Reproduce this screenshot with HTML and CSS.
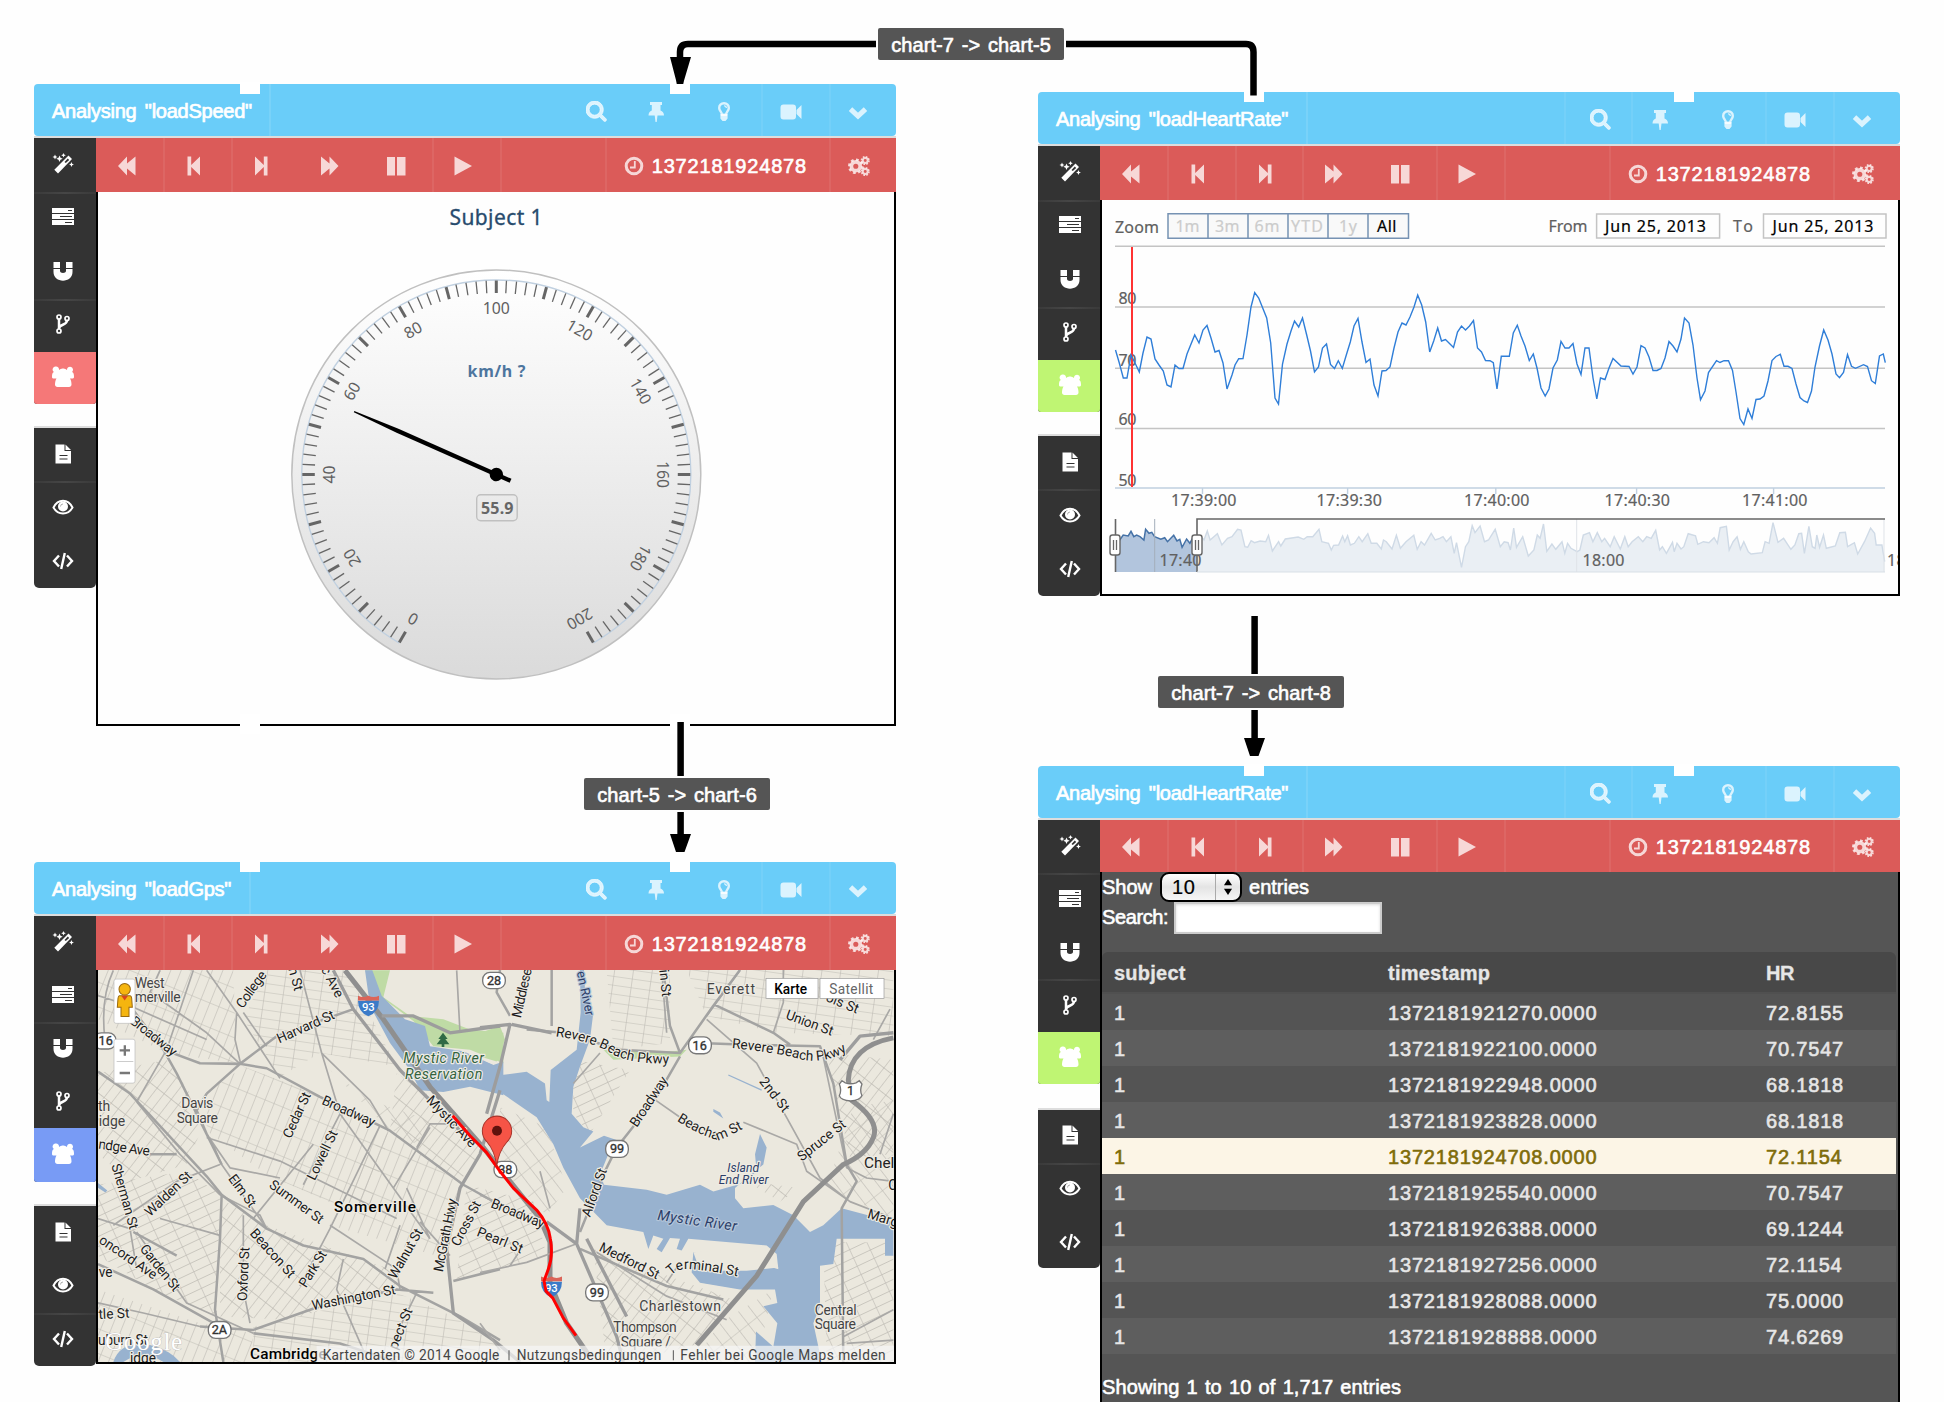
FILE: index.html
```html
<!DOCTYPE html>
<html lang="en">
<head>
<meta charset="utf-8">
<title>Chart analysis</title>
<link rel="stylesheet" href="styles.css">
</head>
<body>
<svg class="defs" aria-hidden="true">
  <symbol id="search" viewBox="0 0 1792 1792"><path d="M1152 704q0-185-131.500-316.500t-316.500-131.500-316.500 131.500-131.500 316.500 131.500 316.500 316.500 131.500 316.500-131.500 131.500-316.500zm512 832q0 52-38 90t-90 38q-54 0-90-38l-343-342q-179 124-399 124-143 0-273.500-55.500t-225-150-150-225-55.500-273.500 55.500-273.500 150-225 225-150 273.500-55.500 273.500 55.500 225 150 150 225 55.500 273.500q0 220-124 399l343 343q37 37 37 90z" stroke="currentColor" stroke-width="70"/></symbol>
  <symbol id="pin" viewBox="0 0 22 22"><path d="M5 1h12v3h-1.500v5.500c2 .8 3.500 2.500 3.500 5h-6.500L11.700 21h-1.200l-.8-6.500H3.500c0-2.500 1.300-4.200 3.300-5V4H5z"/></symbol>
  <symbol id="bulb" viewBox="0 0 22 22"><path d="M11 2.200c3 0 4.800 2.200 4.800 4.700 0 2.800-2.600 4-2.800 6.800H9c-.2-2.800-2.800-4-2.800-6.800C6.200 4.400 8 2.200 11 2.200z" fill="none" stroke="currentColor" stroke-width="2.400"/><path d="M7.400 13h7.200v4.500L12.500 20h-3l-2.100-2.500zM11 4.200c2 0 3 1.200 3 2.800h-1.300c0-1-.6-1.600-1.700-1.600z"/></symbol>
  <symbol id="video" viewBox="0 0 22 22"><path d="M3.500 3.500h9.500a3 3 0 0 1 3 3v9a3 3 0 0 1-3 3H3.500a3 3 0 0 1-3-3v-9a3 3 0 0 1 3-3zM16.500 9 21.500 4v14l-5-5z"/></symbol>
  <symbol id="down" viewBox="0 0 22 22"><path d="m3.500 8.200 7.500 7 7.500-7" fill="none" stroke="currentColor" stroke-width="5"/></symbol>
  <symbol id="rewind" viewBox="0 0 22 22"><path d="M2 11 11 1.500v7l8.500-7v19l-8.500-7v7z"/></symbol>
  <symbol id="prev" viewBox="0 0 22 22"><path d="M4.500 1.500h3.700V10l8.800-8.500v19L8.200 12v8.500H4.500z"/></symbol>
  <symbol id="next" viewBox="0 0 22 22"><path d="M17.500 1.500h-3.700V10L5 1.500v19l8.800-8.500v8.500h3.700z"/></symbol>
  <symbol id="forward" viewBox="0 0 22 22"><path d="M20.500 11 11.500 1.500v7L3 1.500v19l8.500-7v7z"/></symbol>
  <symbol id="pause" viewBox="0 0 22 22"><path d="M2 2h8v18.500H2zM12 2h8.500v18.500H12z"/></symbol>
  <symbol id="play" viewBox="0 0 22 22"><path d="M2.500 1.500 20 11 2.500 20.500z"/></symbol>
  <symbol id="clock" viewBox="0 0 22 22"><circle cx="11" cy="11" r="7.800" fill="none" stroke="currentColor" stroke-width="3"/><path d="M11.800 6v6.500H7" fill="none" stroke="currentColor" stroke-width="1.800"/></symbol>
  <symbol id="cogs" viewBox="0 0 24 22"><g fill="none" stroke="currentColor"><circle cx="8.500" cy="11.300" r="4.800" stroke-width="4"/><circle cx="8.500" cy="11.300" r="7.300" stroke-width="2.400" stroke-dasharray="3 2.733"/><circle cx="18.800" cy="5" r="2.700" stroke-width="2.200"/><circle cx="18.800" cy="5" r="4.200" stroke-width="1.600" stroke-dasharray="1.900 1.400"/><circle cx="18.800" cy="17" r="2.700" stroke-width="2.200"/><circle cx="18.800" cy="17" r="4.200" stroke-width="1.600" stroke-dasharray="1.900 1.400"/></g></symbol>
  <symbol id="wand" viewBox="0 0 22 22"><path d="M16.500 2.500 20 6 6 20.500 2.300 16.800zM15.800 5.500l-3.300 3.400 1.300 1.200L17.200 7zM3 1.500l.8 1.700 1.700.8-1.700.8L3 6.500l-.8-1.700L.5 4l1.700-.8zM11.500 0l.7 1.600 1.600.7-1.600.7-.7 1.600-.7-1.600-1.600-.7 1.600-.7zM7.500 2.500l1 2.200 2.200 1-2.200 1-1 2.200-1-2.200-2.200-1 2.200-1zM19.500 9l.7 1.700 1.700.8-1.700.7-.7 1.700-.8-1.700-1.600-.7 1.600-.8z"/></symbol>
  <symbol id="tasks" viewBox="0 0 22 22"><path fill-rule="evenodd" d="M0 2h22v5H0zM16 4v1h4V4zM0 8h22v5H0zM8 10v1h12v-1zM0 14h22v5H0zM13 16v1h7v-1z"/></symbol>
  <symbol id="magnet" viewBox="0 0 22 22"><path d="M1.500 2H8v6H1.500zM14 2h6.500v6H14zM1.500 9H8v2c0 2.600 6 2.600 6 0V9h6.500v3c0 11.500-19 11.500-19 0z"/></symbol>
  <symbol id="fork" viewBox="0 0 22 22"><g fill="none" stroke="currentColor"><g stroke-width="1.700"><circle cx="7" cy="4" r="2"/><circle cx="7" cy="18" r="2"/><circle cx="15" cy="5.500" r="2"/></g><path d="M7 6v10M15 7.500c0 5-8 3.500-8 8" stroke-width="2.500"/></g></symbol>
  <symbol id="group" viewBox="0 0 22 22"><path d="M4 .5a3 3 0 0 1 3 3.500A5 5 0 0 1 11 2.500 5 5 0 0 1 15 4a3 3 0 1 1 5 2c1.500.5 2 2 2 5 0 1-.8 1.500-2 1.500h-2c1 1.500 1.500 4 1.500 6 0 1.500-1 2.500-2.500 2.500H5.500C4 21 3 20 3 18.500c0-2 .5-4.500 1.500-6H2C.8 12.500 0 12 0 11c0-3 .5-4.500 2-5A3 3 0 0 1 4 .5z"/></symbol>
  <symbol id="file" viewBox="0 0 22 22"><path d="M3.500 1.500h9v6.500h6.500v12.500H3.500zM13.500 1.500 19 7h-5.500z"/><path d="M7.500 12.500h8M7.500 16h8" stroke="#333" stroke-width="1.200"/></symbol>
  <symbol id="eye" viewBox="0 0 22 22"><path d="M1.500 11.500C6 2.500 16 2.500 20.500 11.500 16 19.500 6 19.500 1.500 11.500z" fill="none" stroke="currentColor" stroke-width="2"/><circle cx="11" cy="10.500" r="5"/><path d="M8.500 10.500a2.500 2.500 0 0 1 2.500-2.500" fill="none" stroke="#999" stroke-width=".8"/></symbol>
  <symbol id="code" viewBox="0 0 22 22"><path d="M7 6.500 2 12l5 5.500M15 6.500l5 5.500-5 5.500M12.800 4 9.200 20" fill="none" stroke="currentColor" stroke-width="2.400"/></symbol>
</svg>

<main class="canvas">

<section class="win win-speed">
  <header class="head"><h2>Analysing "loadSpeed"</h2>
    <span class="btn find"><svg><use href="#search"/></svg></span><span class="btn hb"><svg><use href="#pin"/></svg></span><span class="btn hb"><svg><use href="#bulb"/></svg></span><span class="btn hb edge"><svg><use href="#video"/></svg></span><span class="btn edge"><svg><use href="#down"/></svg></span></header>
  <div class="cols">
    <nav class="side"><div class="grp top"><span><svg><use href="#wand"/></svg></span><span class="line"><svg><use href="#tasks"/></svg></span><span><svg><use href="#magnet"/></svg></span><span class="line"><svg><use href="#fork"/></svg></span><span class="subject red"><svg><use href="#group"/></svg></span></div>
      <div class="grp low"><span><svg><use href="#file"/></svg></span><span class="line"><svg><use href="#eye"/></svg></span><span><svg><use href="#code"/></svg></span></div></nav>
    <div class="main">
      <div class="player"><span class="btn"><svg><use href="#rewind"/></svg></span><span class="btn edge"><svg><use href="#prev"/></svg></span><span class="btn edge"><svg><use href="#next"/></svg></span><span class="btn"><svg><use href="#forward"/></svg></span><span class="btn"><svg><use href="#pause"/></svg></span><span class="btn edge"><svg><use href="#play"/></svg></span><span class="fill edge"></span><span class="time edge"><svg><use href="#clock"/></svg>1372181924878</span><span class="btn edge"><svg><use href="#cogs"/></svg></span></div>
      <div class="view">
        <svg class="plot" viewBox="98 192 796 532">
          <defs><linearGradient id="dial" x1="0" y1="0" x2="0" y2="1"><stop offset="0" stop-color="#fff"/><stop offset="1" stop-color="#dadada"/></linearGradient></defs>
          <text x="449.500" y="224.500" class="gtitle" textLength="93">Subject 1</text>
          <circle cx="496.300" cy="474.500" r="204.500" fill="url(#dial)" stroke="#c0c0c0" stroke-width="1.500"/>
          <g id="ticks" transform="translate(496.300 474.500)"></g>
          <text x="467.500" y="376.700" class="gunit" textLength="58">km/h ?</text>
          <rect x="476.700" y="494.800" width="40.500" height="26" rx="4" fill="none" stroke="#c0c0c0" stroke-width="1.400"/>
          <text x="481" y="514" class="gval" textLength="32.500">55.9</text>
          <g transform="translate(496.300 474.500) rotate(-66.150)"><path d="M-2.200 15.600V-108L-.6-155.500H.6L2.200-108V15.600z"/><circle r="6.700"/></g>
        </svg>
      </div>
    </div>
  </div>
</section>

<section class="win right win-heart">
  <header class="head"><h2>Analysing "loadHeartRate"</h2>
    <span class="btn find edge"><svg><use href="#search"/></svg></span><span class="btn hb edge"><svg><use href="#pin"/></svg></span><span class="btn hb"><svg><use href="#bulb"/></svg></span><span class="btn hb edge"><svg><use href="#video"/></svg></span><span class="btn edge"><svg><use href="#down"/></svg></span></header>
  <div class="cols">
    <nav class="side"><div class="grp top"><span><svg><use href="#wand"/></svg></span><span class="line"><svg><use href="#tasks"/></svg></span><span><svg><use href="#magnet"/></svg></span><span class="line"><svg><use href="#fork"/></svg></span><span class="subject green"><svg><use href="#group"/></svg></span></div>
      <div class="grp low"><span><svg><use href="#file"/></svg></span><span class="line"><svg><use href="#eye"/></svg></span><span><svg><use href="#code"/></svg></span></div></nav>
    <div class="main">
      <div class="player"><span class="btn"><svg><use href="#rewind"/></svg></span><span class="btn edge"><svg><use href="#prev"/></svg></span><span class="btn edge"><svg><use href="#next"/></svg></span><span class="btn edge"><svg><use href="#forward"/></svg></span><span class="btn"><svg><use href="#pause"/></svg></span><span class="btn edge"><svg><use href="#play"/></svg></span><span class="fill edge"></span><span class="time edge"><svg><use href="#clock"/></svg>1372181924878</span><span class="btn edge"><svg><use href="#cogs"/></svg></span></div>
      <div class="view">
        <svg class="plot stock" viewBox="1102 200 796 394">
          <text x="1115" y="232.700" textLength="44">Zoom</text>
          <g class="ranges"><path d="M1168 213.700h240.500v24.500H1168zM1208 213.700v24.500M1248 213.700v24.500M1288 213.700v24.500M1328 213.700v24.500M1368 213.700v24.500"/></g>
          <g class="off"><text x="1175.500" y="232" textLength="24">1m</text><text x="1215" y="232" textLength="24.500">3m</text><text x="1254.500" y="232" textLength="25">6m</text><text x="1291" y="232" textLength="32">YTD</text><text x="1339" y="232" textLength="18">1y</text></g>
          <text class="on" x="1377" y="232" textLength="19.500">All</text>
          <text x="1548.500" y="232" textLength="39">From</text><text x="1733" y="232" textLength="20">To</text>
          <path class="box" d="M1596.600 214h123v24h-123zM1763.500 214h122.500v24h-122.500z"/>
          <text class="on" x="1605" y="232" textLength="101">Jun 25, 2013</text><text class="on" x="1772.500" y="232" textLength="101">Jun 25, 2013</text>
          <path class="grid" d="M1115 246.200h770M1115 307h770M1115 368.300h770M1115 428.500h770"/>
          <path class="axis" d="M1115 488h770M1202.500 488v6M1347.600 488v6M1495.800 488v6M1636.600 488v6M1773.600 488v6"/>
          <text x="1118.500" y="304" textLength="18">80</text><text x="1118.500" y="365.500" textLength="18">70</text><text x="1118.500" y="425" textLength="18">60</text><text x="1118.500" y="485.500" textLength="18">50</text>
          <path class="cursor" d="M1132 247v240"/>
          <path class="series" id="series"/>
          <text x="1171" y="506" textLength="65.500">17:39:00</text><text x="1316.500" y="506" textLength="65.500">17:39:30</text><text x="1464" y="506" textLength="65.500">17:40:00</text><text x="1604.500" y="506" textLength="65.500">17:40:30</text><text x="1742" y="506" textLength="65.500">17:41:00</text>
          <path id="navfill" fill="#eaeff4"/><path id="navline" fill="none" stroke="#cfdae6" stroke-width="1.400"/>
          <path id="selfill" fill="#b2c5dd"/><path id="selline" fill="none" stroke="#4572a7" stroke-width="1.500"/>
          <path d="M1154.700 519v53" stroke="#a3aebb"/><path d="M1576.700 519v53M1884 519v53" stroke="#dfe3e8"/>
          <path d="M1115.500 519v53M1197 572V519h688" fill="none" stroke="#666" stroke-width="1.600"/>
          <path d="M1197 572h688" stroke="#d8dfe6"/>
          <text x="1159.500" y="566" textLength="42">17:40</text><text x="1582.500" y="566" textLength="42">18:00</text><text x="1887" y="566" textLength="42">18:20</text>
          <g class="handle"><rect x="1110" y="535" width="10" height="20" rx="2.500"/><path d="M1113.500 540v10M1116.500 540v10"/><rect x="1192" y="535" width="10" height="20" rx="2.500"/><path d="M1195.500 540v10M1198.500 540v10"/></g>
        </svg>
      </div>
    </div>
  </div>
</section>

<section class="win win-gps">
  <header class="head"><h2>Analysing "loadGps"</h2>
    <span class="btn find"><svg><use href="#search"/></svg></span><span class="btn hb"><svg><use href="#pin"/></svg></span><span class="btn hb"><svg><use href="#bulb"/></svg></span><span class="btn hb edge"><svg><use href="#video"/></svg></span><span class="btn edge"><svg><use href="#down"/></svg></span></header>
  <div class="cols">
    <nav class="side"><div class="grp top"><span><svg><use href="#wand"/></svg></span><span><svg><use href="#tasks"/></svg></span><span class="line"><svg><use href="#magnet"/></svg></span><span><svg><use href="#fork"/></svg></span><span class="subject blue"><svg><use href="#group"/></svg></span></div>
      <div class="grp low"><span><svg><use href="#file"/></svg></span><span><svg><use href="#eye"/></svg></span><span class="line"><svg><use href="#code"/></svg></span></div></nav>
    <div class="main">
      <div class="player"><span class="btn"><svg><use href="#rewind"/></svg></span><span class="btn edge"><svg><use href="#prev"/></svg></span><span class="btn edge"><svg><use href="#next"/></svg></span><span class="btn"><svg><use href="#forward"/></svg></span><span class="btn"><svg><use href="#pause"/></svg></span><span class="btn edge"><svg><use href="#play"/></svg></span><span class="fill edge"></span><span class="time edge"><svg><use href="#clock"/></svg>1372181924878</span><span class="btn edge"><svg><use href="#cogs"/></svg></span></div>
      <div class="view">
        <svg class="plot map" viewBox="234 354 2388 1161" preserveAspectRatio="none">
          <defs>
            <pattern id="s1" width="56" height="27" patternUnits="userSpaceOnUse" patternTransform="rotate(-25)"><path d="M0 0h56M0 0v27" /></pattern>
            <pattern id="s2" width="29" height="68" patternUnits="userSpaceOnUse" patternTransform="rotate(22)"><path d="M0 0h29M0 0v68" /></pattern>
            <pattern id="s3" width="27" height="60" patternUnits="userSpaceOnUse" patternTransform="rotate(38)"><path d="M0 0h27M0 0v60" /></pattern>
            <pattern id="s4" width="56" height="26" patternUnits="userSpaceOnUse" patternTransform="rotate(8)"><path d="M0 0h56M0 0v26" /></pattern>
            <pattern id="s5" width="33" height="64" patternUnits="userSpaceOnUse" patternTransform="rotate(-38)"><path d="M0 0h33M0 0v64" /></pattern>
            <path id="rb1" d="M226 550Q330 565 385 595 430 630 560 632"/>
            <path id="rb2" d="M755 585Q900 600 960 618 1040 635 1110 588"/>
            <path id="bst" d="M590 800Q660 845 715 858 740 850 800 818"/>
            <path id="tst" d="M574 1260Q590 1238 625 1240 700 1245 775 1262"/>
          </defs>
          <rect x="234" y="354" width="2388" height="1161" fill="#ebe8de"/>
          <g class="streets">
            <path fill="url(#s2)" d="M234 354H640L650 630 440 600 234 500z"/>
            <path fill="url(#s4)" d="M740 354H980L1130 640 900 600 780 670 670 500z"/>
            <path fill="url(#s3)" d="M234 660 440 620 560 790 500 930 330 980 234 900z"/>
            <path fill="url(#s2)" d="M670 640 940 740 1110 830 1040 1090 740 960 560 830 560 720z"/>
            <path fill="url(#s5)" d="M930 650 1050 740 1230 800 1190 870 1100 820z"/>
            <path fill="url(#s2)" d="M1110 830 1320 990 1250 1200 930 1110 1040 900z"/>
            <path fill="url(#s1)" d="M234 990 500 950 600 1020 590 1380 400 1300 234 1200z"/>
            <path fill="url(#s3)" d="M600 1030 740 1110 1110 1240 1140 1300 800 1390 600 1380z"/>
            <path fill="url(#s2)" d="M234 1300 540 1400 700 1430 690 1515H234z"/>
            <path fill="url(#s4)" d="M700 1410 1130 1310 1300 1380 1440 1470 1440 1515H700z"/>
            <path fill="url(#s3)" d="M1130 660 1220 720 1390 880 1320 980 1110 830z"/>
            <path fill="url(#s1)" d="M1340 990 1540 1040 1580 1200 1310 1270z"/>
          </g>
          <g class="streets" transform="translate(1380)">
            <path fill="url(#s4)" d="M380 354H570V570L400 590z"/>
            <path fill="url(#s1)" d="M280 620 450 650 330 840 280 780z"/>
            <path fill="url(#s4)" d="M620 354H1240V550L890 540 680 490z"/>
            <path fill="url(#s3)" d="M1040 600 1240 620V900L1110 910z"/>
            <path fill="url(#s5)" d="M1120 760 1240 740V1090L1040 1000z"/>
            <path fill="url(#s3)" d="M800 980 960 1000 900 1040z"/>
            <path fill="url(#s3)" d="M340 1180 760 1330 660 1460 440 1515H380z"/>
            <path fill="url(#s5)" d="M720 1400 880 1300 830 1515H640z"/>
            <path fill="url(#s1)" d="M1030 1160H1240V1515H1040z"/>
            <path fill="url(#s5)" d="M60 760 200 820 260 1000 200 1080 60 940z"/>
          </g>
          <path class="park" d="M1035 355h75l-20 80 80 55 100 10 80 30 100 10v90l-100-40-110-10-60-75-110-80z"/>
          <path class="water" d="M1035 355h22l28 75 70 70 60 20 15 60 100 15 90 40 30-10v100l-100-25-80 15-70-5-30-60-60-80-60-110z"/>
          <path class="water" d="M234 985l28 22-6 6-22-14zM280 1515q20-65 110-50 60 15 90 50h-50q-60-40-120 0z"/>
          <g transform="translate(1380)">
            <path class="park" d="M0 540 60 520 75 560 50 625 0 610zM370 590 580 595 620 590 600 610 400 620z"/>
            <path class="water" d="M0 620 50 640 65 665 140 655 195 690 200 740 208 745 212 650 290 590 302 480 300 354H312L318 470 340 480 330 560 300 640 280 700 275 780 310 820 340 832 300 880 372 845 412 858 385 900 360 960 372 990 500 1005 560 1020 660 990 700 1010 790 985 830 950 825 900 840 840 860 880 850 930 800 970 765 1000 765 1030 790 1060 880 1050 940 1080 990 1130 1030 1110 1085 1060 1240 1100V1200L1215 1200V1150H1070L1060 1225 1020 1230V1350L1000 1400 1025 1515H825L828 1425 880 1470 892 1400 850 1350 892 1340 885 1300 780 1300 660 1280 635 1250 640 1190 760 1200 895 1240 890 1195 860 1170 625 1150 605 1185 590 1180 600 1150 570 1148 545 1190 530 1180 550 1150 520 1140 505 1180 490 1130 380 1110 330 1060 300 1030 250 940 220 870 170 790 60 715 0 700zM700 766l20 10 10 18-30-20z"/>
            <path d="M640 1190 760 1180 880 1195 895 1235 800 1245 660 1245z" fill="#ebe8de"/>
            <path d="M650 1258 780 1262 815 1285 780 1298 670 1280z" class="water"/>
            <path d="M745 665l100 45" class="wline"/>
          </g>
          <g class="road thin">
            <path d="M520 355 440 590 350 745M420 355 390 420 560 540 660 632M234 430 330 460 560 560M650 480 645 560 662 632M280 355Q240 440 255 560M560 355 650 480 780 675M670 480 740 580M840 355 905 600 960 780 850 990M905 600 1050 740 1105 830M960 780 1120 1000 1230 1150M1080 815 930 1120 840 1290M1230 820 1120 1000M1190 880 1230 810 1300 810M560 850 780 920 1130 1090M570 850 605 930 740 1120M350 745 480 900 600 1020M560 840 630 940 780 970M600 1020 720 1080 740 1120M350 1130 500 1340 700 1430M234 1090 330 1120 350 1240M420 1090 600 1140M670 1080V1300L690 1400M930 1110 1130 1240 1140 1300M1140 1110 1095 1240M970 1210 950 1300 1030 1480M880 870 700 1090M234 1340 370 1370 540 1410M280 1110 470 980 600 930M1310 355 1320 540M1160 1000 1230 1150M1190 1310 1120 1450M1290 1200 1200 1100"/>
          </g>
          <g class="road">
            <path d="M234 655 330 720 560 965 605 1020 600 1150 585 1360 610 1515M330 460 430 590 540 630 660 632 740 645 900 730 1110 830 1330 990 1440 1050M660 632 770 550 1000 470M560 720 660 632M560 720 530 770 560 840M430 590 470 660 560 840 605 930M605 1020 740 1120 850 1170 1030 1210 1140 1290 1320 1380 1440 1450M540 1410 700 1420 900 1350 1130 1300 1240 1310M470 1200 340 1130M380 900 470 900M1300 1275 1440 1240M234 1225 400 1300 600 1410M700 1430 960 1460 1130 1515"/>
          </g>
          <g class="hwy">
            <path d="M975 355 1090 500 1230 700 1390 880 1470 980 1560 1090 1590 1160 1590 1280 1640 1400 1710 1500"/>
            <path class="mid" d="M940 355 1000 470 1140 650 1350 860M1085 490 1180 490 1290 540 1440 520M1440 710 1380 900 1320 1000 1280 1180 1300 1370 1420 1450 1500 1515"/>
          </g>
          <g transform="translate(1380)">
            <g class="road thin"><path d="M780 354 680 490M680 500 830 630 1020 970 1110 1040M910 354V450L880 540M1180 560 1230 470M520 735 600 790M790 805 950 870 980 950 1110 1040 1240 1090M1025 590 1100 940 1160 970 1240 980M560 540 545 354M280 690 360 600M0 1020 120 1080M0 1250 140 1220 290 1165M90 1230 130 1170M350 1190 560 1320 740 1390M560 1280 600 1220M1090 1440 1240 1360M1100 1460 1240 1450M0 1400 60 1480M180 950 210 1060M1240 780 1200 900"/></g>
            <g class="road"><path d="M60 354 50 420 90 490M215 354V520M140 530 250 540 420 590 600 600M550 354 570 520 600 600 700 460 780 354M620 570 700 572 760 574 1020 580 1060 690 1100 930 1130 980 1085 1060 1090 1515M700 455 880 540 930 575M600 610 530 730 450 830 410 880 370 960 300 1130M300 1180 560 1290 730 1330"/></g>
            <g class="hwy"><path d="M1240 555Q1110 580 1105 680L1115 740Q1200 800 1180 850 1160 900 1090 930L970 1040 830 1260 650 1465"/><path class="mid" d="M0 525 90 515 60 640 20 780M95 515 215 540M1240 540 1140 550 1080 620M300 1060 290 1165 410 1440 430 1515M290 1165 200 1100M320 1150 440 1380"/></g>
          </g>
          <g class="lbl">
            <text x="344" y="406" class="town" textLength="90">West</text><text x="344" y="450" class="town" textLength="138">merville</text>
            <text x="484" y="764" class="town" textLength="96">Davis</text><text x="470" y="808" class="town" textLength="124">Square</text>
            <text x="234" y="771" class="town">th</text><text x="236" y="815" class="town">idge</text>
            <text transform="translate(668 470) rotate(-54)" textLength="125">College</text>
            <text transform="translate(805 350) rotate(75)">n St</text><text transform="translate(902 352) rotate(62)">c Ave</text>
            <text transform="translate(778 572) rotate(-24)" textLength="185">Harvard St</text>
            <text transform="translate(328 510) rotate(38)" textLength="165">Broadway</text>
            <text transform="translate(903 750) rotate(24)" textLength="170">Broadway</text>
            <text transform="translate(812 855) rotate(-65)" textLength="145">Cedar St</text>
            <text transform="translate(884 980) rotate(-64)" textLength="160">Lowell St</text>
            <text transform="translate(1217 742) rotate(46)" textLength="195">Mystic Ave</text>
            <text transform="translate(234 883) rotate(8)" textLength="155">ndge Ave</text>
            <text transform="translate(274 932) rotate(74)" textLength="200">Sherman St</text>
            <text transform="translate(390 1086) rotate(-43)" textLength="175">Walden St</text>
            <text transform="translate(623 972) rotate(53)" textLength="110">Elm St</text>
            <text transform="translate(745 996) rotate(36)" textLength="190">Summer St</text>
            <text transform="translate(688 1135) rotate(48)" textLength="180">Beacon St</text>
            <text transform="translate(358 1180) rotate(51)" textLength="165">Garden St</text>
            <text transform="translate(234 1160) rotate(34)" textLength="200">oncord Ave</text>
            <text transform="translate(680 1335) rotate(-87)" textLength="160">Oxford St</text>
            <text transform="translate(858 1297) rotate(-58)" textLength="120">Park St</text>
            <text transform="translate(1127 1272) rotate(-60)" textLength="165">Walnut St</text>
            <text transform="translate(1268 1250) rotate(-79)" textLength="220">McGrath Hwy</text>
            <text transform="translate(1316 1175) rotate(-62)" textLength="145">Cross St</text>
            <text transform="translate(878 1362) rotate(-11)" textLength="255">Washington St</text>
            <text transform="translate(1130 1480) rotate(-68)">pect St</text>
            <text x="236" y="1388" transform="rotate(-3 236 1388)">tle St</text><text x="236" y="1263">ve</text><text x="234" y="1465" textLength="150">uburn St</text><text x="330" y="1518">idge</text>
            <text x="942" y="1070" class="city" textLength="246">Somerville</text><text x="690" y="1507" class="city" textLength="230">Cambridge</text>
            <g class="parklbl"><text x="1150" y="630" textLength="242">Mystic River</text><text x="1155" y="676" textLength="232">Reservation</text></g>
            <path d="M1269 540l14 18h-7l12 16h-15v8h-8v-8h-15l12-16h-7z" fill="#2f6a45"/>
          </g>
          <g class="lbl" transform="translate(1380)">
            <text transform="translate(122 498) rotate(-77)" textLength="150">Middlese</text>
            <text transform="translate(290 360) rotate(78)" class="river sm">en River</text>
            <text transform="translate(538 354) rotate(84)">in St</text>
            <text x="680" y="425" class="town" textLength="145">Everett</text>
            <text transform="translate(1035 445) rotate(22)">ols St</text>
            <text transform="translate(915 498) rotate(20)" textLength="148">Union St</text>
            <text><textPath href="#rb1">Revere Beach Pkwy</textPath></text>
            <text><textPath href="#rb2">Revere Beach Pkwy</textPath></text>
            <text transform="translate(470 822) rotate(-56)" textLength="170">Broadway</text>
            <text transform="translate(836 684) rotate(52)" textLength="120">2nd St</text>
            <text><textPath href="#bst">Beacham St</textPath></text>
            <text transform="translate(965 922) rotate(-38)" textLength="172">Spruce St</text>
            <text transform="translate(330 1088) rotate(-70)" textLength="150">Alford St</text>
            <text transform="translate(30 1056) rotate(22)" textLength="170">Broadway</text>
            <text transform="translate(-12 1140) rotate(22)" textLength="145">Pearl St</text>
            <text transform="translate(355 1185) rotate(26)" textLength="195">Medford St</text>
            <text><textPath href="#tst">Terminal St</textPath></text>
            <text transform="translate(1160 1088) rotate(17)">Marg</text><text x="1225" y="1005">C</text>
            <text x="1152" y="941" class="city thin">Chelsea</text>
            <text x="742" y="951" class="river sm2" textLength="96">Island</text><text x="716" y="989" class="river sm2" textLength="150">End River</text>
            <text transform="translate(531 1094) rotate(8)" class="river" textLength="240">Mystic River</text>
            <text x="478" y="1363" class="town" textLength="245">Charlestown</text><text x="400" y="1425" class="town" textLength="190">Thompson</text><text x="422" y="1470" class="town" textLength="150">Square /</text>
            <text x="1004" y="1375" class="town" textLength="126">Central</text><text x="1004" y="1418" class="town" textLength="124">Square</text>
          </g>
          <g class="shield">
            <rect x="222" y="540" width="66" height="48" rx="22"/><text x="257" y="577">16</text>
            <rect x="1388" y="361" width="68" height="48" rx="22"/><text x="1422" y="398">28</text>
            <rect x="565" y="1395" width="68" height="50" rx="22"/><text x="598" y="1433">2A</text>
            <rect x="2006" y="552" width="68" height="50" rx="22"/><text x="2039" y="591">16</text>
            <rect x="1757" y="859" width="68" height="50" rx="22"/><text x="1791" y="897">99</text>
            <rect x="1697" y="1284" width="68" height="50" rx="22"/><text x="1731" y="1323">99</text>
            <rect x="1422" y="921" width="68" height="48" rx="22"/><text x="1456" y="959">38</text>
            <path d="M2466 682l10 6q16 6 32 0l10-6 8 10q-8 20 0 34-6 14-34 16-30-2-34-16 8-14 0-34z"/><text x="2492" y="723">1</text>
          </g>
          <g id="i93" class="inter"><path d="M1014 445h63q0 34-32 46-31-12-31-46z" fill="#3b7bc8"/><path d="M1014 430q16 8 31 0 16 8 32 0v14h-63z" fill="#db6458"/><text x="1045" y="475">93</text></g>
          <use href="#i93" transform="translate(549 832)"/>
          <path class="track" d="M1298 786 1350 845 1400 895 1440 950 1480 1000 1550 1065Q1585 1105 1591 1150 1600 1200 1585 1240L1572 1275 1578 1305 1598 1325 1630 1385 1668 1437"/>
          <path d="M1430 935Q1425 890 1400 862A44 44 0 1 1 1462 862Q1436 890 1430 935z" fill="#f65446" stroke="#a8332a" stroke-width="3"/><circle cx="1431" cy="830" r="15" fill="#5f120d"/>
          <text x="255" y="1478" class="logo" textLength="232">Google</text>
          <g class="ctl"><rect x="282" y="381" width="63" height="131" rx="6"/><rect x="282" y="559" width="63" height="130" rx="6"/></g>
          <path d="M290 625h50" stroke="#ccc" stroke-width="3"/><path d="M299 592h31M314.500 577v31M299 659h31" stroke="#777" stroke-width="7"/>
          <g fill="#f5b50f" stroke="#9a6a10" stroke-width="3"><path d="M298 430h32q4 0 5 8l2 26h-10v28h-24v-28h-11l2-26q1-8 4-8z"/><circle cx="314" cy="411" r="17"/></g><path d="M304 430h20l-10 14z" fill="#d8431f"/>
          <g class="tabs"><rect x="2238" y="379" width="156" height="59"/><rect x="2400" y="379" width="192" height="59"/><text x="2263" y="426" textLength="98" class="cur">Karte</text><text x="2428" y="426" textLength="132">Satellit</text></g>
          <rect x="890" y="1467" width="1732" height="48" fill="#f5f5f5" opacity=".72"/>
          <g class="credit"><text x="908" y="1509" textLength="530">Kartendaten © 2014 Google</text><text x="1490" y="1509" textLength="434">Nutzungsbedingungen</text><path d="M1467 1480v30M1960 1480v30" stroke="#555" stroke-width="3"/><text x="1981" y="1509" textLength="616">Fehler bei Google Maps melden</text></g>
        </svg>
      </div>
    </div>
  </div>
</section>

<section class="win right win-table">
  <header class="head"><h2>Analysing "loadHeartRate"</h2>
    <span class="btn find edge"><svg><use href="#search"/></svg></span><span class="btn hb edge"><svg><use href="#pin"/></svg></span><span class="btn hb"><svg><use href="#bulb"/></svg></span><span class="btn hb edge"><svg><use href="#video"/></svg></span><span class="btn edge"><svg><use href="#down"/></svg></span></header>
  <div class="cols">
    <nav class="side"><div class="grp top"><span><svg><use href="#wand"/></svg></span><span class="line"><svg><use href="#tasks"/></svg></span><span><svg><use href="#magnet"/></svg></span><span class="line"><svg><use href="#fork"/></svg></span><span class="subject green"><svg><use href="#group"/></svg></span></div>
      <div class="grp low"><span><svg><use href="#file"/></svg></span><span class="line"><svg><use href="#eye"/></svg></span><span><svg><use href="#code"/></svg></span></div></nav>
    <div class="main">
      <div class="player"><span class="btn"><svg><use href="#rewind"/></svg></span><span class="btn edge"><svg><use href="#prev"/></svg></span><span class="btn edge"><svg><use href="#next"/></svg></span><span class="btn edge"><svg><use href="#forward"/></svg></span><span class="btn"><svg><use href="#pause"/></svg></span><span class="btn edge"><svg><use href="#play"/></svg></span><span class="fill edge"></span><span class="time edge"><svg><use href="#clock"/></svg>1372181924878</span><span class="btn edge"><svg><use href="#cogs"/></svg></span></div>
      <div class="view dark">
        <div class="length">Show <span class="select"><b>10</b><i><svg viewBox="0 0 10 20"><path d="M5 1 9.500 8H.5zM5 19 .5 12h9z"/></svg></i></span> entries</div>
        <label class="filter"><span>Search:</span><input type="text"></label>
        <table>
          <thead><tr><th>subject</th><th>timestamp</th><th>HR</th></tr></thead>
          <tbody>
            <tr><td>1</td><td>1372181921270.0000</td><td>72.8155</td></tr>
            <tr><td>1</td><td>1372181922100.0000</td><td>70.7547</td></tr>
            <tr><td>1</td><td>1372181922948.0000</td><td>68.1818</td></tr>
            <tr><td>1</td><td>1372181923828.0000</td><td>68.1818</td></tr>
            <tr class="current"><td>1</td><td>1372181924708.0000</td><td>72.1154</td></tr>
            <tr><td>1</td><td>1372181925540.0000</td><td>70.7547</td></tr>
            <tr><td>1</td><td>1372181926388.0000</td><td>69.1244</td></tr>
            <tr><td>1</td><td>1372181927256.0000</td><td>72.1154</td></tr>
            <tr><td>1</td><td>1372181928088.0000</td><td>75.0000</td></tr>
            <tr><td>1</td><td>1372181928888.0000</td><td>74.6269</td></tr>
          </tbody>
        </table>
        <p class="info">Showing 1 to 10 of 1,717 entries</p>
      </div>
    </div>
  </div>
</section>

<svg class="links" viewBox="0 0 1944 1402">
  <g fill="#fff"><path d="M240 82h20v12h-20zM670 82h20v12h-20zM1244 90h20v12h-20zM1674 90h20v12h-20zM240 714h20v20h-20zM670 714h20v20h-20zM240 860h20v12h-20zM670 860h20v12h-20zM1244 764h20v12h-20zM1674 764h20v12h-20z"/></g>
  <g fill="none" stroke="#000" stroke-width="6.500"><path d="M876 44H688q-8 0-8 8V84M1066 44H1246q7.500 0 7.500 8V95.500"/><path d="M680.600 722v54M680.600 812v24M1254.600 616v58M1254.600 710v30"/></g>
  <path d="M670 57h21l-8 27h-6zM670 834h21l-6.500 18h-8.500zM1244 738h21l-6.500 18h-8.500z"/>
</svg>
<span class="tag tag-a">chart-7 -&gt; chart-5</span>
<span class="tag tag-b">chart-5 -&gt; chart-6</span>
<span class="tag tag-c">chart-7 -&gt; chart-8</span>
</main>
<script src="charts.js"></script>
</body>
</html>
```
FILE: styles.css
```css
* { box-sizing: border-box; }
body { margin: 0; background: #fefefe; font: 20px "Liberation Sans", Arial, sans-serif; }
.defs { display: none; }
.canvas { position: relative; width: 1944px; height: 1402px; overflow: hidden; }

/* windows on the canvas */
.win { position: absolute; width: 862px; display: flex; flex-direction: column; --head: 52px; --player: 54px; --item: 53.5px; --last: 52px; --gap: 22px; --low: 53.3px; --nudge: -2px; }
.right { --nudge: 1px; }
.win-speed { left: 34px; top: 84px; height: 642px; }
.win-heart { left: 1038px; top: 92px; height: 504px; }
.win-gps { left: 34px; top: 862px; height: 502px; --item: 53px; --last: 54px; }
.win-table { left: 1038px; top: 766px; height: 660px; --player: 52px; --item: 53px; --gap: 24px; --low: 52.7px; }

.head { height: var(--head); flex: none; display: flex; background: #6acdf9; border-radius: 4px; color: #fff; }
.head h2 { margin: 0 auto 0 0; padding: 0 17.5px 0 18px; font-size: 20px; font-weight: 400; line-height: 55px; border-right: 2px solid rgba(255,255,255,.1); -webkit-text-stroke: .7px; letter-spacing: -.25px; word-spacing: 3px; white-space: nowrap; }
.cols { flex: 1; display: flex; align-items: flex-start; border-top: 2px solid #ddd; min-height: 0; }

.btn { width: 67.3px; display: flex; align-items: center; justify-content: center; border-left: 2px solid transparent; color: rgba(255,255,255,.76); }
.btn svg, .time svg { width: 22px; height: 22px; fill: currentColor; position: relative; left: -4px; top: .5px; }
.head .btn svg { top: 2px; left: -5px; }
.head .find svg { left: 3px; }
.edge { border-left: 2px solid rgba(255,255,255,.07); }
.player { height: var(--player); flex: none; display: flex; background: #db5b59; }
.fill { flex: 1; }
.time { width: 224px; display: flex; align-items: center; padding: 2px 0 0 20px; color: #fff; letter-spacing: .82px; -webkit-text-stroke: .6px; white-space: nowrap; }
.time svg { left: -4px; top: -.5px; margin-right: 3px; opacity: .76; }

.side { width: 62px; flex: none; }
.grp { display: flex; flex-direction: column; background: #333; color: #fff; }
.grp span { height: var(--item); display: flex; align-items: center; justify-content: center; padding-bottom: 2px; }
.grp svg { width: 22px; height: 22px; fill: currentColor; position: relative; left: var(--nudge); }
.grp .line { background: linear-gradient(90deg, #3a3a3a, #464646, #3a3a3a) top / 100% 2px no-repeat; }
.grp .subject { height: var(--last); border-radius: 0 0 3px 3px; }
.grp .red { background: #f57878; }
.grp .green { background: #bff573; }
.grp .blue { background: #789bf5; }
.top { border-radius: 0 0 3px 3px; }
.low { margin-top: var(--gap); border-top: 2px solid #ddd; border-radius: 0 0 5px 5px; }
.low span { height: var(--low); }

.main { flex: 1; align-self: stretch; display: flex; flex-direction: column; min-width: 0; }
.view { flex: 1; min-height: 0; border: 2px solid #000; border-top: 0; background: #fefefe; overflow: hidden; }
.plot { display: block; width: 100%; height: 100%; font-family: "Noto Sans", sans-serif; }

/* gauge */
.gtitle { font-size: 21px; fill: #274b6d; stroke: #274b6d; stroke-width: .3; }
.gunit { font-size: 16px; font-weight: 700; fill: #4d759e; }
.gval { font-size: 16px; font-weight: 700; fill: #666; }
#ticks text { font-size: 15.8px; fill: #606060; text-anchor: middle; }

/* heart rate chart */
.stock text { font-size: 16px; fill: #606060; stroke: #606060; stroke-width: .2; }
.stock .off text { fill: #ccc; stroke: #ccc; }
.stock text.on { fill: #000; stroke: #000; }
.ranges path { fill: #f9f9f9; stroke: #7692b3; stroke-width: 1.5; }
.box { fill: none; stroke: #c4c4c4; stroke-width: 1.5; }
.grid { stroke: #c4c4c4; stroke-width: 1.5; }
.axis { stroke: #c0d0e0; stroke-width: 1.4; fill: none; }
.cursor { stroke: #f33; stroke-width: 2; }
.series { fill: none; stroke: #2f7ed8; stroke-width: 1.4; }
.handle rect { fill: #fff; stroke: #666; stroke-width: 1.4; }
.handle path { stroke: #666; stroke-width: 1.3; }

/* map */
.map { font-family: Roboto, sans-serif; }
pattern path { stroke: #bebbb4; stroke-width: 3.6; fill: none; }
.park { fill: #bfdba5; }
.water { fill: #98b2cf; }
.wline { stroke: #98b2cf; stroke-width: 4; }
.road path { fill: none; stroke: #a3a3a2; stroke-width: 7.5; stroke-linejoin: round; }
.road.thin path { stroke-width: 5; stroke: #a9a8a6; }
.hwy path { fill: none; stroke: #8f8f8f; stroke-width: 15; stroke-linejoin: round; }
.hwy .mid { stroke-width: 10; stroke: #9d9d9d; }
.lbl text { font-size: 41px; fill: #1c1c1c; stroke: #efece4; stroke-width: 7; paint-order: stroke; stroke-linejoin: round; }
.lbl .town { font-size: 42px; fill: #444; }
.lbl .city { font-size: 46px; fill: #000; font-weight: 500; }
.lbl .city.thin { font-weight: 400; fill: #222; }
.lbl .parklbl text { font-size: 43px; font-style: italic; fill: #33633f; }
.lbl .river { font-size: 43px; font-style: italic; fill: #2c3e68; stroke: #b4c5d9; }
.lbl .sm { font-style: normal; font-size: 38px; }
.lbl .sm2 { font-size: 37px; stroke: #efece4; }
.shield rect, .shield path { fill: #fff; stroke: #777; stroke-width: 4; }
.shield text { font-size: 38px; text-anchor: middle; fill: #333; stroke: #333; }
.inter text { font-size: 34px; font-weight: 500; fill: #fff; text-anchor: middle; }
.track { fill: none; stroke: #f00; stroke-width: 9; stroke-linejoin: round; }
.logo { font: 76px "Liberation Serif", serif; fill: #fff; stroke: #a9a9a9; stroke-width: 1.5; paint-order: stroke; }
.ctl rect { fill: #fff; stroke: #bbb; stroke-width: 2; }
.tabs rect { fill: #fff; stroke: #999; stroke-width: 2; }
.tabs text { font-size: 41px; fill: #666; }
.tabs .cur { fill: #000; font-weight: 500; }
.credit text { font-size: 41px; fill: #444; }

/* data table */
.dark { background: #555; color: #fff; -webkit-text-stroke: .6px; }
.length { height: 30px; line-height: 30px; display: flex; gap: 7px; white-space: nowrap; }
.select { width: 82px; height: 30px; margin-left: 1px; border: 2px solid #000; border-radius: 9px; background: linear-gradient(#fff, #e4e4e4 50%, #f6f6f6); color: #000; display: flex; -webkit-text-stroke: .2px; }
.select b { flex: 1; padding-left: 10px; font-weight: 400; line-height: 27px; letter-spacing: .7px; }
.select i { width: 25px; border-left: 1px solid #aaa; display: flex; align-items: center; justify-content: center; }
.select svg { width: 10px; height: 18px; }
.filter { height: 32px; line-height: 30px; display: flex; }
.filter span { width: 72px; letter-spacing: -.4px; }
.filter input { width: 208px; height: 32px; border: 2px solid #ccc; background: #fff; padding: 0; box-shadow: inset 0 1px 3px rgba(0,0,0,.15); }
table { width: 794px; margin-top: 18px; border-collapse: separate; border-spacing: 0; table-layout: fixed; color: #e6e6e6; }
th { height: 42px; padding: 2px 0 0 12px; text-align: left; letter-spacing: .25px; -webkit-text-stroke: .3px; background: #484848; border-bottom: 2px solid #505050; }
th:first-child { width: 274px; border-top-left-radius: 6px; }
th:nth-child(2) { width: 378px; }
th:last-child { border-top-right-radius: 6px; letter-spacing: -.5px; }
td { height: 36px; padding: 2px 0 0 12px; letter-spacing: .82px; background: #545454; }
tr:nth-child(even) td { background: #5e5e5e; }
tr.current td { background: #fcf5e6; color: #7f6c0a; }
.info { margin: 20px 0 0; line-height: 26px; letter-spacing: .1px; word-spacing: 1.5px; }

/* connections between windows */
.links { position: absolute; inset: 0; width: 1944px; height: 1402px; pointer-events: none; }
.tag { position: absolute; width: 186px; height: 32px; line-height: 34px; border-radius: 2px; background: #555; color: #fff; text-align: center; white-space: nowrap; letter-spacing: .1px; word-spacing: 2px; -webkit-text-stroke: .6px; }
.tag-a { left: 878px; top: 28px; }
.tag-b { left: 584px; top: 778px; }
.tag-c { left: 1158px; top: 676px; }
```
FILE: charts.js
```js
// Gauge scale: 0 to 200 over 300 degrees, a tick every 2 units
var out = '<path d="M-97.3 168.4A194.5 194.5 0 1 1 97.3 168.4" fill="none" stroke="#c0d0e0" stroke-width="1.4"/>';
for (var v = 0; v <= 200; v += 2) {
  var a = -150 + v * 1.5;
  out += '<path transform="rotate(' + a + ')" d="M0-194V-181.500" stroke="#666" stroke-width="' + (v % 10 ? 1.3 : 3) + '"/>';
  if (v % 20 === 0) out += '<text transform="rotate(' + a + ')" y="-161">' + v + '</text>';
}
document.getElementById('ticks').innerHTML = out;

function line(points) { return 'M' + points.join(' '); }

// Heart rate samples
var hr = '1115.5,350 1119.3,363 1123.3,378 1127,378 1131,355 1135,363 1139.3,372 1143,353 1147,337 1151,339 1155,359 1159,365 1163.3,371 1167,385 1171,387 1175,365 1179,368.5 1183,368.5 1187,354 1194.7,335 1199,343 1203,330 1207,325.5 1211,338 1215,352 1219,350.5 1223,363 1227,389 1232,375 1235,365 1238.7,358.7 1243,358.5 1247,335 1251,307 1254.7,292.5 1258.7,298 1262.7,308 1266.7,318 1270.7,343 1275,398 1278.500,404 1282.5,364 1287,344 1291,331 1294.5,321 1298.7,327 1302.5,318 1306.7,335 1310.5,351 1314.5,372 1318.5,367 1322.5,348 1326.5,344 1330.5,364.5 1334.5,368.5 1338.3,360.7 1342.3,368.5 1346.3,355 1350.3,342 1354,326 1358,318.5 1362,342 1366,362.5 1370,359 1374,385 1378,396 1382,371 1386,370.5 1390,367 1394,348 1398,332 1402,323 1406,325 1410,317 1414,307 1417.7,295 1421.7,305 1425.7,322 1429.7,352 1433.7,341 1437.7,328 1441.5,341 1445.5,339.5 1449.5,343.5 1453.5,347.5 1457.5,332 1461.5,326 1465.5,330 1469.5,326 1473.5,320.5 1477.5,348 1481.5,352 1485.5,360.5 1490,360.700 1493.3,362.7 1497,389 1501.3,356.3 1509.3,356.3 1513.3,333 1517.3,325.3 1521,336 1525,346 1529.3,360.5 1533.3,354 1537,368 1541,388 1545.2,396 1549,389 1553,368 1557.3,360 1561,341.5 1565,348 1569,348 1573,343.5 1577,364 1581,374.5 1585,348 1589,348 1593,378 1596.8,399 1600.5,378 1605,379.5 1609,368 1613,358.5 1621,366 1629,366.5 1633,374 1637,367 1641,345.7 1645,348 1649,357 1653,370.5 1657,370.5 1661,368.5 1665,358 1669,341.5 1673,346 1677,352 1681,339 1684.5,318 1689,323 1693,345 1697,378 1700.5,399.7 1705,391 1708.5,372.5 1716.5,360.7 1720,362.5 1724,360.7 1728.5,360.7 1732.5,370.5 1736,392 1740,418.5 1743.8,424.5 1748,409 1752,418.5 1756,399.5 1760,399 1764,396 1768,381 1772,360.5 1776,356.5 1780.3,354.3 1784,366.3 1788,366.3 1792,368.5 1796,384 1800,397.5 1804,401 1807.5,402.5 1811.5,391 1815,367 1819.5,346 1823.7,330 1828,340 1832,354 1836,374 1839.5,377.7 1843.5,372.5 1847.5,354.5 1851.5,366.3 1855.5,368.3 1863.5,364.7 1867.5,366.5 1871.5,380.7 1875.3,383.5 1879.5,356 1883.3,354 1885.3,362.7'.split(' ');
document.getElementById('series').setAttribute('d', line(hr));

// Navigator overview, in its own sample grid
function nav(text) {
  return text.split(';').map(function (p) {
    var c = p.split(',');
    return (1030 + c[0] / 1.782).toFixed(1) + ',' + (360 + c[1] / 3).toFixed(1);
  });
}
function area(p) { return line(p) + 'V572H' + p[0].split(',')[0] + 'z'; }
var all = nav('297,540;305,530;310,540;316,513;321,540;334,521;342,555;352,535;360,530;370,508;376,510;383,560;388,562;394,542;400,548;410,543;420,545;425,526;432,573;443,545;447,558;455,537;478,531;488,538;494,530;504,530;515,508;520,545;532,550;537,570;541,556;550,555;557,528;561,545;566,527;571,555;578,550;586,530;592,545;602,521;608,550;618,550;626,567;630,540;635,545;645,567;653,526;660,565;670,545;684,526;690,568;697,545;703,555;715,520;722,540;730,535;736,530;742,545;750,530;756,580;760,548;769,622;776,560;782,545;788,497;793,518;802,498;810,545;817,540;829,508;838,560;845,545;852,548;856,570;862,504;867,562;878,530;888,588;898,570;904,525;909,535;915,492;921,574;930,552;937,568;948,545;953,580;958,550;964,565;975,575;980,570;986,525;997,518;1003,545;1011,518;1019,545;1024,535;1034,560;1041,530;1052,567;1060,530;1066,560;1073,545;1084,530;1092,545;1099,530;1107,535;1115,511;1122,570;1127,560;1134,580;1145,547;1148,575;1153,550;1160,567;1165,560;1173,521;1186,527;1190,553;1200,545;1210,548;1219,533;1225,550;1230,503;1241,499;1246,570;1253,545;1260,530;1266,568;1272,545;1280,575;1285,582;1305,578;1310,545;1317,550;1324,488;1333,547;1343,535;1356,568;1363,555;1370,521;1375,520;1380,580;1388,499;1394,560;1399,565;1402,525;1407,562;1414,525;1419,565;1435,558;1443,518;1453,517;1457,560;1469,548;1475,582;1487,545;1498,504;1505,520;1508,555;1518,555;1523,605');
var sel = nav('153,545;160,540;166,525;175,528;180,514;185,530;190,525;196,530;203,540;206,508;212,520;217,517;222,530;233,538;240,533;245,545;256,526;262,543;267,538;271,562;279,537;285,550;291,530;297,540');
document.getElementById('navfill').setAttribute('d', area(all));
document.getElementById('navline').setAttribute('d', line(all));
document.getElementById('selfill').setAttribute('d', area(sel));
document.getElementById('selline').setAttribute('d', line(sel));
```
